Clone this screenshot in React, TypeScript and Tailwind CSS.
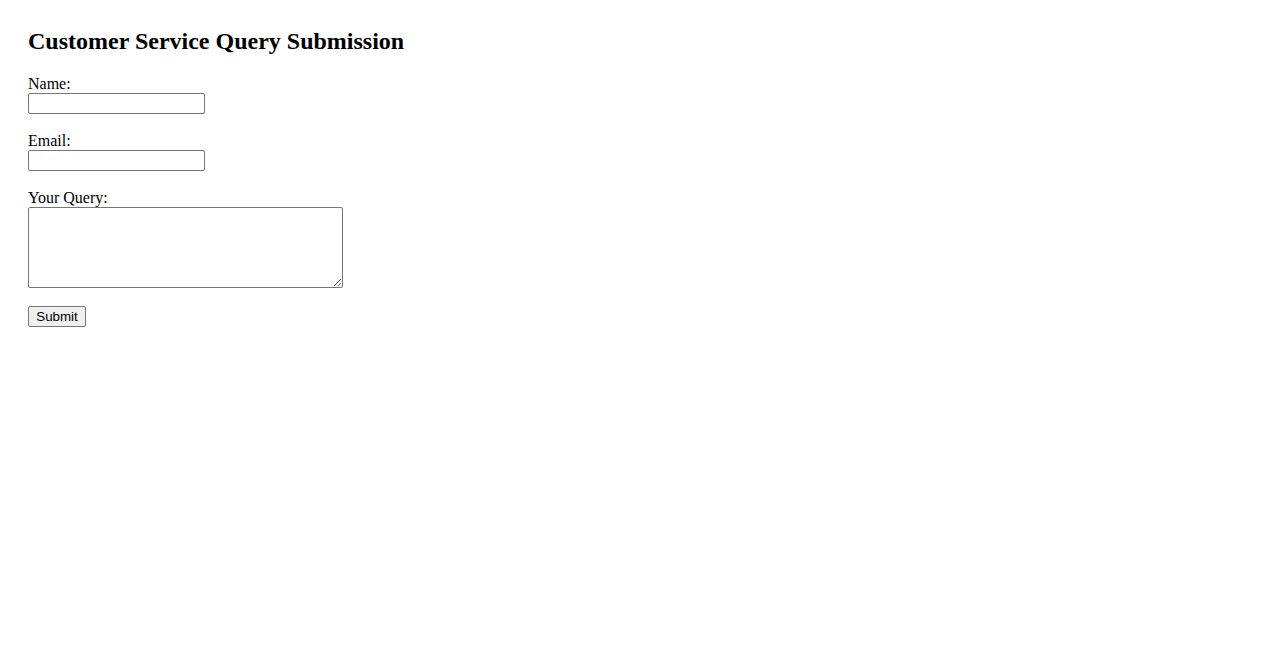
import React from "react";

export default function App() {
  return (
    <div className="min-h-screen bg-white pl-[28px] pt-[28px] text-black" style={{ fontFamily: '"Liberation Serif", "Times New Roman", serif' }}>
      <h2 className="text-[24px] font-bold leading-[26px] mb-[22px]">Customer Service Query Submission</h2>
      <form className="flex flex-col items-start" onSubmit={(e) => e.preventDefault()}>
        <label htmlFor="name" className="block text-[16px] leading-[15px] h-[17px]">Name:</label>
        <input id="name" type="text" className="block w-[177px] h-[21px] border border-[#767676] rounded-[2px] bg-white px-[2px] text-[13px] mb-[19px]" />
        <label htmlFor="email" className="block text-[16px] leading-[15px] h-[17px]">Email:</label>
        <input id="email" type="email" className="block w-[177px] h-[21px] border border-[#767676] rounded-[2px] bg-white px-[2px] text-[13px] mb-[19px]" />
        <label htmlFor="query" className="block text-[16px] leading-[15px] h-[17px]">Your Query:</label>
        <textarea id="query" className="block w-[315px] h-[81px] border border-[#767676] rounded-[2px] bg-white p-[2px] text-[13px] mb-[18px]" />
        <button type="submit" className="block w-[58px] h-[21px] border border-[#767676] rounded-[2px] bg-[#efefef] text-[13.33px] leading-[19px] text-black" style={{ fontFamily: '"Liberation Sans", Arial, sans-serif' }}>Submit</button>
      </form>
    </div>
  );
}
